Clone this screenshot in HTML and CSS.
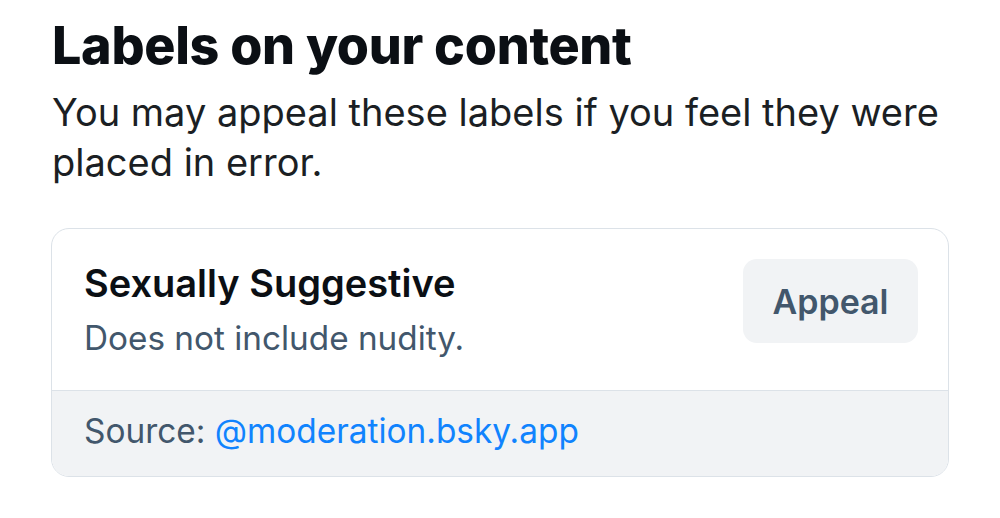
FILE: index.html
```html
<!DOCTYPE html>
<html lang="en">
<head>
  <meta charset="UTF-8">
  <meta name="viewport" content="width=device-width, initial-scale=1.0">
  <link rel="stylesheet" href="styles.css">
  <title>Labels on your content</title>
</head>
<body>
  <div class="labels_page">
    <h1 class="page_title">Labels on your content</h1>
    <p class="page_desc">You may appeal these labels if you feel they were placed in error.</p>

    <div class="label_card">
      <div class="label_main">
        <div class="label_text">
          <p class="label_name">Sexually Suggestive</p>
          <p class="label_desc">Does not include nudity.</p>
        </div>
        <button class="appeal_btn">Appeal</button>
      </div>
      <div class="label_source">
        Source: <a href="#" class="source_link">@moderation.bsky.app</a>
      </div>
    </div>
  </div>
</body>
</html>
```

FILE: styles.css
```css
/* Basics */
body {
  margin: 0;
  font-family: "Inter", "Roboto", sans-serif;
  background-color: #ffffff;
  color: #0b0f14;
}

p {
  margin: 0;
}

button {
  font-family: inherit;
  border: none;
  cursor: pointer;
}

.labels_page {
  padding: 14px 52px 0 52px;
}

/* Title */
.page_title {
  margin: 0;
  font-size: 52px;
  font-weight: 800;
  line-height: 64px;
  letter-spacing: -0.3px;
}

.page_desc {
  margin-top: 9px;
  width: 900px;
  font-size: 38px;
  line-height: 50px;
  color: #1b1f24;
}

/* Label card */
.label_card {
  margin-top: 41px;
  margin-left: -1px;
  width: 896px;
  border: 1px solid #dce2e8;
  border-radius: 18px;
  overflow: hidden;
}

.label_main {
  display: flex;
  justify-content: space-between;
  align-items: flex-start;
  height: 161px;
  padding: 30px 30px 0 32px;
  box-sizing: border-box;
}

.label_name {
  font-size: 38px;
  font-weight: 600;
  line-height: 48px;
}

.label_desc {
  margin-top: 9px;
  font-size: 33.3px;
  line-height: 44px;
  color: #42576c;
}

.appeal_btn {
  width: 175px;
  height: 84px;
  border-radius: 14px;
  background-color: #f1f3f5;
  color: #42576c;
  font-size: 34px;
  font-weight: 600;
}

.label_source {
  padding: 18px 32px 23px;
  border-top: 1px solid #dce2e8;
  background-color: #f1f3f5;
  font-size: 33.4px;
  line-height: 44px;
  color: #42576c;
}

.source_link {
  color: #1083fe;
  text-decoration: none;
}
```
